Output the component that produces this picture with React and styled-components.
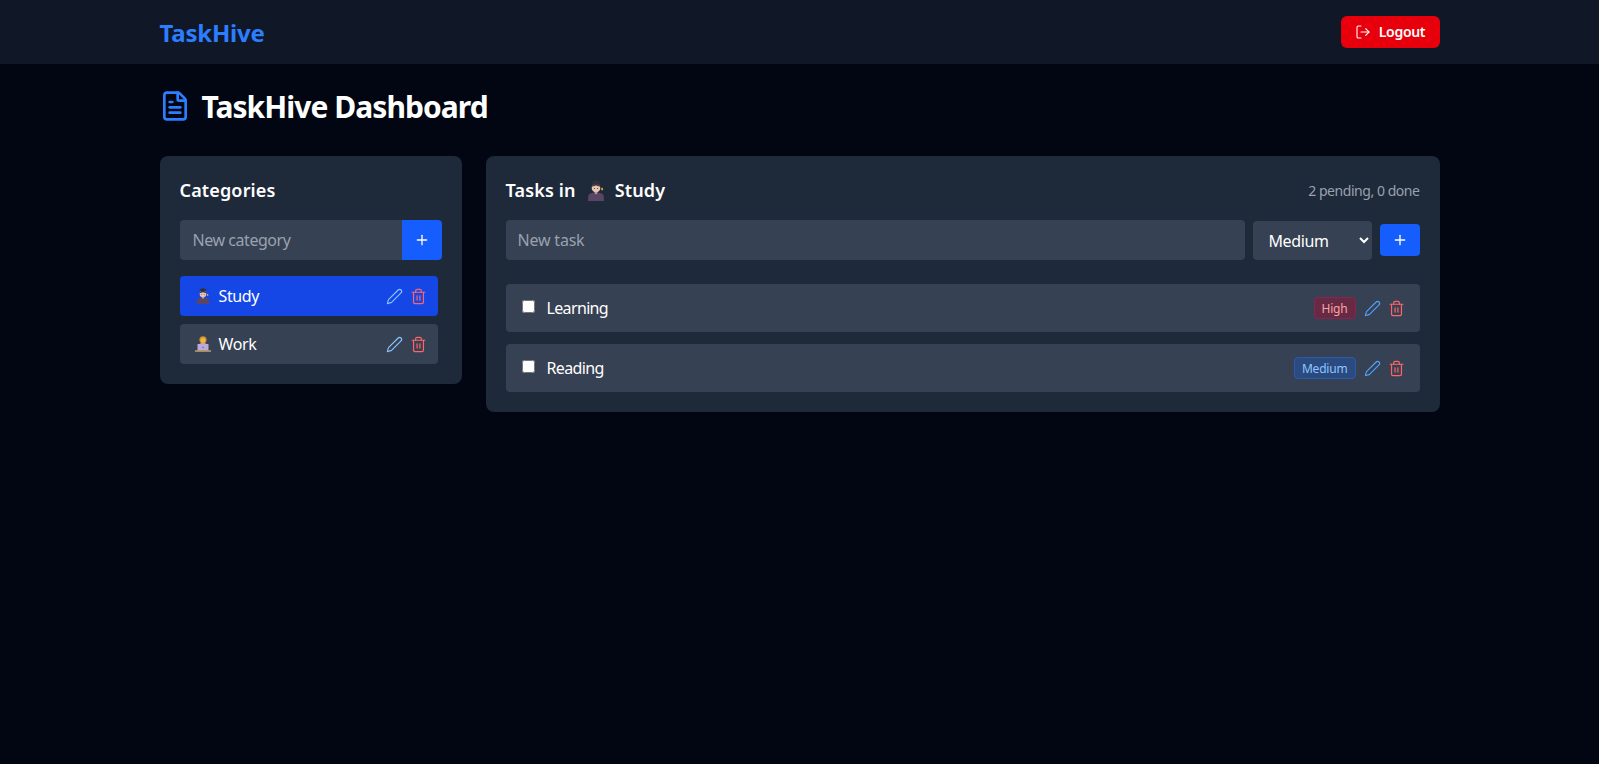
import React from "react";
import styled, { createGlobalStyle } from "styled-components";
import { FileText, LogOut, Plus, Pen, Trash2 } from "lucide-react";

const Global = createGlobalStyle`
  html, body { margin: 0; padding: 0; background: #010612; }
  body { font-family: "Noto Sans", "Open Sans", sans-serif; color: #fff; min-height: 764px; }
  * { box-sizing: border-box; }
`;

const Nav = styled.header`
  height: 64px;
  background: #101828;
`;
const Wrap = styled.div`
  width: 1280px;
  margin: 0 auto;
`;
const NavInner = styled(Wrap)`
  height: 64px;
  display: flex;
  align-items: center;
  justify-content: space-between;
`;
const Logo = styled.div`
  font-size: 24px;
  font-weight: 700;
  line-height: 32px;
  color: #2b7fff;
  letter-spacing: -0.2px;
  margin-top: 1px;
`;
const LogoutBtn = styled.button`
  width: 99px;
  height: 32px;
  margin-top: -1px;
  border: 0;
  border-radius: 6px;
  background: #e7000b;
  color: #fff;
  font: 600 14px "Noto Sans", sans-serif;
  letter-spacing: -0.3px;
  display: flex;
  align-items: center;
  justify-content: center;
  gap: 8px;
  padding: 0;
`;
const Title = styled.h1`
  margin: 24px 0 32px;
  height: 36px;
  display: flex;
  align-items: center;
  gap: 11px;
  font-size: 30px;
  font-weight: 700;
  line-height: 36px;
  color: #2b7fff;
  svg { margin-left: -1px; }
  span { color: #fff; letter-spacing: -0.95px; padding-top: 2px; }
`;
const Grid = styled.main`
  display: grid;
  grid-template-columns: 302px 954px;
  gap: 24px;
  align-items: start;
`;
const Card = styled.section`
  background: #1e2939;
  border-radius: 8px;
  padding: 20px;
`;
const CardHead = styled.div`
  height: 28px;
  margin-bottom: 16px;
  display: flex;
  align-items: center;
  justify-content: space-between;
`;
const H2 = styled.h2`
  margin: 0;
  font-size: 18px;
  font-weight: 600;
  line-height: 28px;
  display: flex;
  align-items: center;
  letter-spacing: 0.15px;
`;
const HeadEmoji = styled.span`
  display: flex;
  margin: 0 10px 0 11px;
`;
const Count = styled.span`
  font-size: 14px;
  color: #99a1af;
  letter-spacing: -0.45px;
`;
const Row = styled.form`
  display: flex;
  align-items: center;
  margin: 0;
`;
const TextInput = styled.input`
  flex: 1;
  min-width: 0;
  height: 40px;
  border: 0;
  outline: 0;
  background: #364153;
  color: #fff;
  padding: 0 12px 0 ${(p) => (p.$joined ? "13px" : "12px")};
  font: 400 16px "Noto Sans", sans-serif;
  letter-spacing: ${(p) => (p.$joined ? "-0.45px" : "-0.2px")};
  border-radius: ${(p) => (p.$joined ? "4px 0 0 4px" : "4px")};
  &::placeholder { color: #99a1af; opacity: 1; }
`;
const JoinedAdd = styled.button`
  width: 40px;
  height: 40px;
  border: 0;
  padding: 0;
  background: #155dfc;
  color: #fff;
  border-radius: 0 4px 4px 0;
  display: flex;
  align-items: center;
  justify-content: center;
`;
const CatList = styled.ul`
  list-style: none;
  margin: 16px 0 0;
  padding: 0 4px 0 0;
  display: flex;
  flex-direction: column;
  gap: 8px;
`;
const CatItem = styled.li`
  height: 40px;
  border-radius: 4px;
  background: ${(p) => (p.$active ? "#1447e6" : "#364153")};
  padding: 0 12px;
  display: flex;
  align-items: center;
  justify-content: space-between;
  font-size: 16px;
`;
const CatName = styled.span`
  display: flex;
  align-items: center;
  gap: 5px;
  letter-spacing: -0.4px;
`;
const Actions = styled.div`
  display: flex;
  align-items: center;
  gap: 8px;
`;
const IconBtn = styled.button`
  width: 16px;
  height: 16px;
  border: 0;
  padding: 0;
  background: none;
  color: ${(p) => p.$color};
  display: flex;
  align-items: center;
  justify-content: center;
  svg { flex: none; margin-left: 1px; }
`;
const Select = styled.select`
  width: 119px;
  height: 39px;
  margin: 1px 8px 0;
  border: 0;
  outline: 0;
  border-radius: 4px;
  background: #364153;
  color: #fff;
  padding: 0 12px;
  font: 400 16px "Noto Sans", sans-serif;
  letter-spacing: -0.4px;
`;
const AddBtn = styled.button`
  width: 40px;
  height: 32px;
  border: 0;
  padding: 0;
  background: #155dfc;
  color: #fff;
  border-radius: 4px;
  display: flex;
  align-items: center;
  justify-content: center;
`;
const TaskList = styled.ul`
  list-style: none;
  margin: 24px 0 0;
  padding: 0;
  display: flex;
  flex-direction: column;
  gap: 12px;
`;
const TaskItem = styled.li`
  height: 48px;
  border-radius: 4px;
  background: #364153;
  padding: 0 16px;
  display: flex;
  align-items: center;
  justify-content: space-between;
`;
const TaskLeft = styled.label`
  display: flex;
  align-items: center;
  gap: 12px;
  font-size: 16px;
  letter-spacing: -0.65px;
`;
const Check = styled.input`
  margin: -3px 0 0 0;
  width: 13px;
  height: 13px;
`;
const Badge = styled.span`
  height: 22px;
  padding: 0 7px;
  border-radius: 4px;
  font-size: 12px;
  display: flex;
  align-items: center;
  letter-spacing: -0.2px;
  color: ${(p) => (p.$high ? "#ffa2a2" : "#8ec5ff")};
  border: 1px solid ${(p) => (p.$high ? "#8f2248" : "#2c5aaa")};
  background: ${(p) => (p.$high ? "#662a45" : "#2b4a80")};
`;
const EmojiBox = styled.svg`
  flex: none;
  display: block;
`;

const Graduate = ({ width, height }) => (
  <EmojiBox width={width} height={height} viewBox="0 0 12 16">
    <path d="M0 16v-3.200C0 10.300 2.800 9.500 6 9.500s6 .8 6 3.300V16z" fill="#5a4566" />
    <path d="M4.600 9.300h2.800L6 11z" fill="#d6b4a2" />
    <circle cx="6" cy="6" r="3.300" fill="#e6c6b2" />
    <path d="M2.700 5.200C2.900 3.300 4.300 2.500 6 2.500s3.100.8 3.300 2.700L6 4.200z" fill="#4a3a45" />
    <path d="M1.800 1.900 6 0l4.200 1.900L6 3.600z" fill="#332e42" />
    <circle cx="4.800" cy="6.500" r=".4" fill="#4a3328" />
    <circle cx="7.200" cy="6.500" r=".4" fill="#4a3328" />
    <rect x="10" y="6" width="1.300" height="1.800" fill="#e0ac2e" />
  </EmojiBox>
);
const Worker = ({ width, height }) => (
  <EmojiBox width={width} height={height} viewBox="0 0 16 16">
    <path d="M3.500 10c0-2 2-3 4.500-3s4.500 1 4.500 3v2h-9z" fill="#e9cf8e" />
    <circle cx="8" cy="3.800" r="3.600" fill="#d4942a" />
    <circle cx="8" cy="4.500" r="2.400" fill="#eeb44e" />
    <rect x="2.500" y="8" width="11" height="6.500" rx=".6" fill="#bda9dc" />
    <rect x="7.300" y="10.700" width="1.400" height="1.400" fill="#7e6a9c" />
    <rect x="0" y="14.400" width="16" height="1.300" fill="#cfb06a" />
  </EmojiBox>
);

const Edit = ({ light }) => (
  <IconBtn $color={light ? "#8ec5ff" : "#51a2ff"}>
    <Pen size={17} strokeWidth={1.6} />
  </IconBtn>
);
const Trash = () => (
  <IconBtn $color="#ff6467">
    <Trash2 size={17} strokeWidth={1.7} />
  </IconBtn>
);

export default function App() {
  return (
    <>
      <Global />
      <Nav>
        <NavInner>
          <Logo>TaskHive</Logo>
          <LogoutBtn>
            <LogOut size={16} strokeWidth={1.6} />
            Logout
          </LogoutBtn>
        </NavInner>
      </Nav>
      <Wrap>
        <Title>
          <FileText size={32} strokeWidth={2} />
          <span>TaskHive Dashboard</span>
        </Title>
        <Grid>
          <Card>
            <CardHead>
              <H2>Categories</H2>
            </CardHead>
            <Row>
              <TextInput $joined placeholder="New category" />
              <JoinedAdd type="button">
                <Plus size={16} strokeWidth={2} />
              </JoinedAdd>
            </Row>
            <CatList>
              <CatItem $active>
                <CatName><Graduate width={22} height={16} /> Study</CatName>
                <Actions><Edit light /><Trash /></Actions>
              </CatItem>
              <CatItem>
                <CatName><Worker width={22} height={16} /> Work</CatName>
                <Actions><Edit light /><Trash /></Actions>
              </CatItem>
            </CatList>
          </Card>
          <Card>
            <CardHead>
              <H2>
                Tasks in
                <HeadEmoji><Graduate width={18} height={21} /></HeadEmoji>
                Study
              </H2>
              <Count>2 pending, 0 done</Count>
            </CardHead>
            <Row>
              <TextInput placeholder="New task" />
              <Select defaultValue="Medium">
                <option>Low</option>
                <option>Medium</option>
                <option>High</option>
              </Select>
              <AddBtn type="button">
                <Plus size={16} strokeWidth={2} />
              </AddBtn>
            </Row>
            <TaskList>
              <TaskItem>
                <TaskLeft><Check type="checkbox" /> Learning</TaskLeft>
                <Actions><Badge $high>High</Badge><Edit /><Trash /></Actions>
              </TaskItem>
              <TaskItem>
                <TaskLeft><Check type="checkbox" /> Reading</TaskLeft>
                <Actions><Badge>Medium</Badge><Edit /><Trash /></Actions>
              </TaskItem>
            </TaskList>
          </Card>
        </Grid>
      </Wrap>
    </>
  );
}
